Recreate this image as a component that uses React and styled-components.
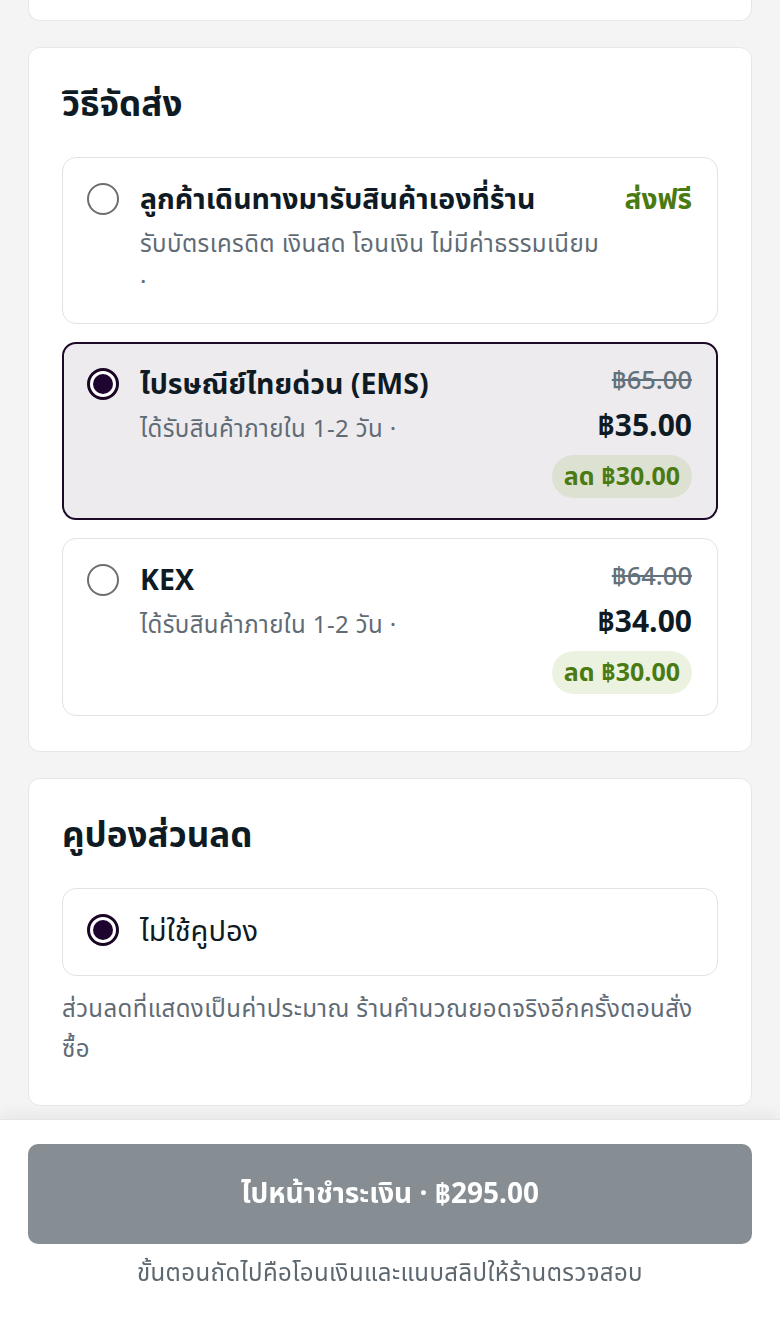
import styled, { createGlobalStyle } from "styled-components";

const GlobalStyle = createGlobalStyle`
    html, body {
        margin: 0;
        padding: 0;
        background: #f4f4f5;
    }
    body {
        font-family: "Noto Sans Thai", "IBM Plex Sans Thai", "Noto Sans", sans-serif;
        color: #0f1b24;
    }
    * { box-sizing: border-box; }
`

const Page = styled.div`
    padding: 0 28px 240px;
    display: flex;
    flex-direction: column;
    gap: 26px;
`
const CardTail = styled.div`
    height: 21px;
    background: #fff;
    border: 1px solid #e3e8ec;
    border-top: none;
    border-radius: 0 0 12px 12px;
`
const Card = styled.section`
    background: #fff;
    border: 1px solid #e3e8ec;
    border-radius: 12px;
    padding: 37px 33px 35px;
`
const Heading = styled.h2`
    margin: 0 0 30px;
    font-size: 35px;
    line-height: 42px;
    font-weight: 700;
    color: #0f1b24;
`
const OptionList = styled.div`
    display: flex;
    flex-direction: column;
    gap: 18px;
`
const Option = styled.label`
    display: flex;
    align-items: flex-start;
    gap: 21px;
    border-radius: 14px;
    border: ${p => p.$active ? "2px solid #1c0a28" : "1px solid #dfe4e8"};
    background: ${p => p.$active ? "#eeebef" : "#fff"};
    padding: ${p => p.$active ? "23px 24px 20px 23px" : "24px 25px 21px 24px"};
    ${p => p.$compact && "padding-top: 24px; padding-bottom: 24px;"}
    cursor: pointer;
`
const Radio = styled.span`
    flex: none;
    width: 32px;
    height: 32px;
    margin-top: 1px;
    border-radius: 50%;
    border: ${p => p.$checked ? "3px solid #1a0624" : "2px solid #6e6e6e"};
    background: #fff;
    display: flex;
    align-items: center;
    justify-content: center;

    &::after {
        content: "";
        display: ${p => p.$checked ? "block" : "none"};
        width: 20px;
        height: 20px;
        border-radius: 50%;
        background: #1e0530;
    }
`
const Info = styled.div`
    flex: 1;
    min-width: 0;
    display: flex;
    flex-direction: column;
`
const Title = styled.div`
    font-size: ${p => p.$regular ? "29px" : "28.5px"};
    line-height: 38px;
    font-weight: ${p => p.$regular ? 400 : 700};
    color: #0f1b24;
`
const Sub = styled.div`
    margin-top: 6px;
    font-size: 24px;
    letter-spacing: 0.4px;
    line-height: 38px;
    color: #5f6b75;
`
const Side = styled.div`
    flex: none;
    display: flex;
    flex-direction: column;
    align-items: flex-end;
`
const FreeTag = styled.div`
    font-size: 28px;
    line-height: 38px;
    font-weight: 700;
    color: #4a7a12;
`
const OldPrice = styled.div`
    font-size: 25.5px;
    line-height: 28px;
    font-weight: 500;
    color: #63717b;
    text-decoration: line-through;
`
const Price = styled.div`
    margin-top: 12px;
    font-size: 30px;
    line-height: 40px;
    font-weight: 700;
    color: #0f1b24;
`
const Saving = styled.div`
    margin-top: 8px;
    height: 43px;
    padding: 0 12px;
    border-radius: 22px;
    display: flex;
    align-items: center;
    font-size: 25px;
    font-weight: 700;
    color: #4a7a12;
    background: rgba(101, 163, 13, 0.13);
`
const Note = styled.p`
    margin: 14px 0 0;
    font-size: 24px;
    letter-spacing: 0.4px;
    line-height: 40px;
    color: #5f6b75;
`
const BottomBar = styled.div`
    position: fixed;
    left: 0;
    right: 0;
    bottom: 0;
    height: 209px;
    background: #fff;
    border-top: 1px solid #e2e6ea;
    box-shadow: 0 -6px 14px rgba(0, 0, 0, 0.05);
    padding: 24px 28px 0;
    display: flex;
    flex-direction: column;
    align-items: stretch;
`
const PayButton = styled.button`
    height: 100px;
    border: none;
    border-radius: 10px;
    background: #878e93;
    color: #fff;
    font-family: inherit;
    font-size: 28px;
    font-weight: 700;
    cursor: not-allowed;
`
const Hint = styled.div`
    margin-top: 14px;
    text-align: center;
    font-size: 24px;
    letter-spacing: 0.4px;
    line-height: 32px;
    color: #5d6770;
`

const shipping = [
    { id: "pickup", title: "ลูกค้าเดินทางมารับสินค้าเองที่ร้าน", sub: "รับบัตรเครดิต เงินสด โอนเงิน ไม่มีค่าธรรมเนียม ·", free: true },
    { id: "ems", title: "ไปรษณีย์ไทยด่วน (EMS)", sub: "ได้รับสินค้าภายใน 1-2 วัน ·", old: "฿65.00", price: "฿35.00", save: "ลด ฿30.00" },
    { id: "kex", title: "KEX", sub: "ได้รับสินค้าภายใน 1-2 วัน ·", old: "฿64.00", price: "฿34.00", save: "ลด ฿30.00" },
]

const App = () => {
    const selected = "ems"
    return (
        <>
            <GlobalStyle />
            <Page>
                <CardTail />
                <Card>
                    <Heading>วิธีจัดส่ง</Heading>
                    <OptionList>
                        {shipping.map(s => (
                            <Option key={s.id} $active={s.id === selected}>
                                <Radio $checked={s.id === selected} />
                                <Info>
                                    <Title>{s.title}</Title>
                                    <Sub>{s.sub}</Sub>
                                </Info>
                                <Side>
                                    {s.free ? (
                                        <FreeTag>ส่งฟรี</FreeTag>
                                    ) : (
                                        <>
                                            <OldPrice>{s.old}</OldPrice>
                                            <Price>{s.price}</Price>
                                            <Saving>{s.save}</Saving>
                                        </>
                                    )}
                                </Side>
                            </Option>
                        ))}
                    </OptionList>
                </Card>
                <Card>
                    <Heading>คูปองส่วนลด</Heading>
                    <Option $compact>
                        <Radio $checked />
                        <Info>
                            <Title $regular>ไม่ใช้คูปอง</Title>
                        </Info>
                    </Option>
                    <Note>ส่วนลดที่แสดงเป็นค่าประมาณ ร้านคำนวณยอดจริงอีกครั้งตอนสั่งซื้อ</Note>
                </Card>
            </Page>
            <BottomBar>
                <PayButton>ไปหน้าชำระเงิน · ฿295.00</PayButton>
                <Hint>ขั้นตอนถัดไปคือโอนเงินและแนบสลิปให้ร้านตรวจสอบ</Hint>
            </BottomBar>
        </>
    )
}

export default App
